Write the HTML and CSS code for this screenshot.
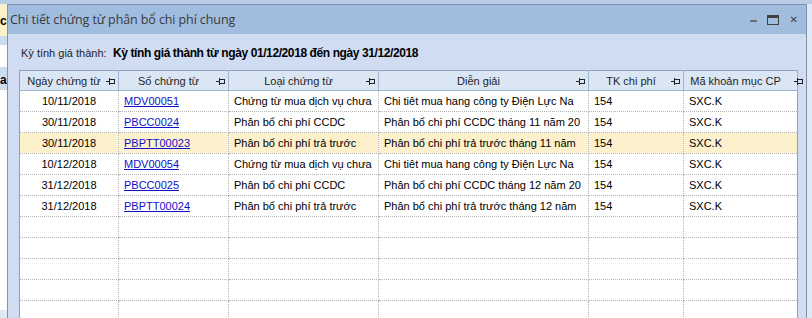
FILE: index.html
```html
<!DOCTYPE html>
<html lang="vi">
<head>
    <meta charset="UTF-8">
    <title>Chi tiết chứng từ phân bổ chi phí chung</title>
    <link rel="stylesheet" href="styles.css">
</head>
<body>

<div class="desk">
    <div class="desk-top"></div>
    <div class="desk-left">
        <div class="strip strip-yellow">c</div>
        <div class="strip strip-blue"></div>
        <div class="strip strip-white"></div>
        <div class="strip strip-blue tall">a</div>
        <div class="strip strip-grid"></div>
    </div>
</div>

<div class="dialog">
    <div class="titlebar">
        <span class="title">Chi tiết chứng từ phân bổ chi phí chung</span>
        <div class="controls">
            <span class="btn-min"></span>
            <span class="btn-max"></span>
            <span class="btn-close">✕</span>
        </div>
    </div>

    <div class="content">
        <div class="period">
            <span class="period-label">Kỳ tính giá thành:</span>
            <span class="period-value">Kỳ tính giá thành từ ngày 01/12/2018 đến ngày 31/12/2018</span>
        </div>

        <table class="grid">
            <colgroup>
                <col style="width:99px">
                <col style="width:110px">
                <col style="width:150px">
                <col style="width:210px">
                <col style="width:95px">
                <col style="width:114px">
            </colgroup>
            <thead>
                <tr>
                    <th><span>Ngày chứng từ</span><svg class="pin" width="9" height="7" viewBox="0 0 9 7"><rect x="0" y="3" width="3" height="1"/><rect x="3" y="0" width="1" height="7"/><rect x="4" y="1" width="5" height="1"/><rect x="4" y="5" width="5" height="1"/><rect x="8" y="1" width="1" height="5"/></svg></th>
                    <th><span>Số chứng từ</span><svg class="pin" width="9" height="7" viewBox="0 0 9 7"><rect x="0" y="3" width="3" height="1"/><rect x="3" y="0" width="1" height="7"/><rect x="4" y="1" width="5" height="1"/><rect x="4" y="5" width="5" height="1"/><rect x="8" y="1" width="1" height="5"/></svg></th>
                    <th><span>Loại chứng từ</span><svg class="pin" width="9" height="7" viewBox="0 0 9 7"><rect x="0" y="3" width="3" height="1"/><rect x="3" y="0" width="1" height="7"/><rect x="4" y="1" width="5" height="1"/><rect x="4" y="5" width="5" height="1"/><rect x="8" y="1" width="1" height="5"/></svg></th>
                    <th><span>Diễn giải</span><svg class="pin" width="9" height="7" viewBox="0 0 9 7"><rect x="0" y="3" width="3" height="1"/><rect x="3" y="0" width="1" height="7"/><rect x="4" y="1" width="5" height="1"/><rect x="4" y="5" width="5" height="1"/><rect x="8" y="1" width="1" height="5"/></svg></th>
                    <th><span>TK chi phí</span><svg class="pin" width="9" height="7" viewBox="0 0 9 7"><rect x="0" y="3" width="3" height="1"/><rect x="3" y="0" width="1" height="7"/><rect x="4" y="1" width="5" height="1"/><rect x="4" y="5" width="5" height="1"/><rect x="8" y="1" width="1" height="5"/></svg></th>
                    <th class="last"><span>Mã khoản mục CP</span><svg class="pin" width="9" height="7" viewBox="0 0 9 7"><rect x="0" y="3" width="3" height="1"/><rect x="3" y="0" width="1" height="7"/><rect x="4" y="1" width="5" height="1"/><rect x="4" y="5" width="5" height="1"/><rect x="8" y="1" width="1" height="5"/></svg></th>
                </tr>
            </thead>
            <tbody>
                <tr>
                    <td class="date">10/11/2018</td>
                    <td><a href="#">MDV00051</a></td>
                    <td>Chứng từ mua dịch vụ chưa</td>
                    <td>Chi tiêt mua hang công ty Điện Lực Na</td>
                    <td>154</td>
                    <td>SXC.K</td>
                </tr>
                <tr>
                    <td class="date">30/11/2018</td>
                    <td><a href="#">PBCC0024</a></td>
                    <td>Phân bổ chi phí CCDC</td>
                    <td>Phân bổ chi phí CCDC tháng 11 năm 20</td>
                    <td>154</td>
                    <td>SXC.K</td>
                </tr>
                <tr class="selected">
                    <td class="date">30/11/2018</td>
                    <td><a href="#">PBPTT00023</a></td>
                    <td>Phân bổ chi phí trả trước</td>
                    <td>Phân bổ chi phí trả trước tháng 11 năm</td>
                    <td>154</td>
                    <td>SXC.K</td>
                </tr>
                <tr>
                    <td class="date">10/12/2018</td>
                    <td><a href="#">MDV00054</a></td>
                    <td>Chứng từ mua dịch vụ chưa</td>
                    <td>Chi tiêt mua hang công ty Điện Lực Na</td>
                    <td>154</td>
                    <td>SXC.K</td>
                </tr>
                <tr>
                    <td class="date">31/12/2018</td>
                    <td><a href="#">PBCC0025</a></td>
                    <td>Phân bổ chi phí CCDC</td>
                    <td>Phân bổ chi phí CCDC tháng 12 năm 20</td>
                    <td>154</td>
                    <td>SXC.K</td>
                </tr>
                <tr>
                    <td class="date">31/12/2018</td>
                    <td><a href="#">PBPTT00024</a></td>
                    <td>Phân bổ chi phí trả trước</td>
                    <td>Phân bổ chi phí trả trước tháng 12 năm</td>
                    <td>154</td>
                    <td>SXC.K</td>
                </tr>
                <tr><td></td><td></td><td></td><td></td><td></td><td></td></tr>
                <tr><td></td><td></td><td></td><td></td><td></td><td></td></tr>
                <tr><td></td><td></td><td></td><td></td><td></td><td></td></tr>
                <tr><td></td><td></td><td></td><td></td><td></td><td></td></tr>
                <tr><td></td><td></td><td></td><td></td><td></td><td></td></tr>
            </tbody>
        </table>
    </div>
</div>

</body>
</html>
```

FILE: styles.css
```css
html, body {
    margin: 0;
    padding: 0;
    height: 100%;
    overflow: hidden;
}
body {
    font-family: "Liberation Sans", Arial, sans-serif;
    font-size: 11px;
    color: #000;
    background: #dfe8f5;
}

/* window behind the dialog */
.desk {
    height: 100%;
    overflow: hidden;
}
.desk-top {
    height: 4px;
    background: #b9cce6;
}
.desk-left {
    width: 7px;
    display: flex;
    flex-direction: column;
}
.strip {
    overflow: hidden;
    font-weight: bold;
    font-size: 12px;
    line-height: 14px;
}
.strip-yellow {
    height: 32px;
    background: #fbf1c8;
    padding-top: 10px;
    box-sizing: border-box;
}
.strip-blue {
    height: 9px;
    background: #cddcf0;
}
.strip-blue.tall {
    height: 22px;
    padding-top: 6px;
    box-sizing: border-box;
}
.strip-white {
    height: 22px;
    background: #fff;
}
.strip-grid {
    height: 220px;
    background: #fff;
    border-top: 1px dotted #b8b8b8;
}

/* dialog */
.dialog {
    position: absolute;
    left: 7px;
    top: 4px;
    bottom: 0;
    width: 798px;
    border: 1px solid #8193ab;
    border-bottom: none;
    background: #cfdcf1;
    overflow: hidden;
}
.titlebar {
    height: 29px;
    background: #a0bde0;
    display: flex;
    align-items: center;
    justify-content: space-between;
}
.title {
    font-family: "Open Sans", "Noto Sans", sans-serif;
    font-size: 12.5px;
    color: #3a3a3a;
    padding-left: 2px;
    letter-spacing: -0.1px;
}
.controls {
    display: flex;
    align-items: center;
    padding-right: 8px;
}
.btn-min {
    width: 7px;
    height: 2px;
    background: #6c6c6c;
    margin-right: 10px;
    margin-top: 2px;
}
.btn-max {
    width: 10px;
    height: 6px;
    border: 1px solid #404040;
    border-top-width: 3px;
    margin-right: 11px;
}
.btn-close {
    font-family: "DejaVu Sans", sans-serif;
    font-size: 10px;
    font-weight: bold;
    color: #404040;
}

.content {
    padding-left: 11px;
}
.period {
    height: 36px;
    display: flex;
    align-items: center;
    padding-left: 2px;
    padding-top: 2px;
    box-sizing: border-box;
    white-space: nowrap;
}
.period-label {
    width: 92px;
    color: #1e1e1e;
}
.period-value {
    font-size: 12px;
    font-weight: bold;
    letter-spacing: -0.4px;
}

/* grid */
.grid {
    border-collapse: collapse;
    table-layout: fixed;
    width: 779px;
    background: #fff;
    border: 1px solid #8ba2c2;
}
.grid th {
    height: 19px;
    padding: 0 14px 0 4px;
    background: #dbe6f4;
    border-right: 1px solid #9fb6d3;
    border-bottom: 1px solid #9fb6d3;
    font-weight: normal;
    color: #1e1e1e;
    position: relative;
    text-align: center;
    white-space: nowrap;
}
.pin {
    position: absolute;
    right: 3px;
    top: 7px;
    fill: #222;
}
.grid th.last .pin {
    right: -6px;
}
.grid td {
    height: 20px;
    padding: 0 5px;
    border-right: 1px dotted #b4b4b4;
    border-bottom: 1px dotted #b4b4b4;
    white-space: nowrap;
    overflow: hidden;
}
.grid td.date {
    text-align: center;
}
.grid tr.selected td {
    background: #fdf0cc;
}
.grid a {
    color: #1010c8;
}
```
